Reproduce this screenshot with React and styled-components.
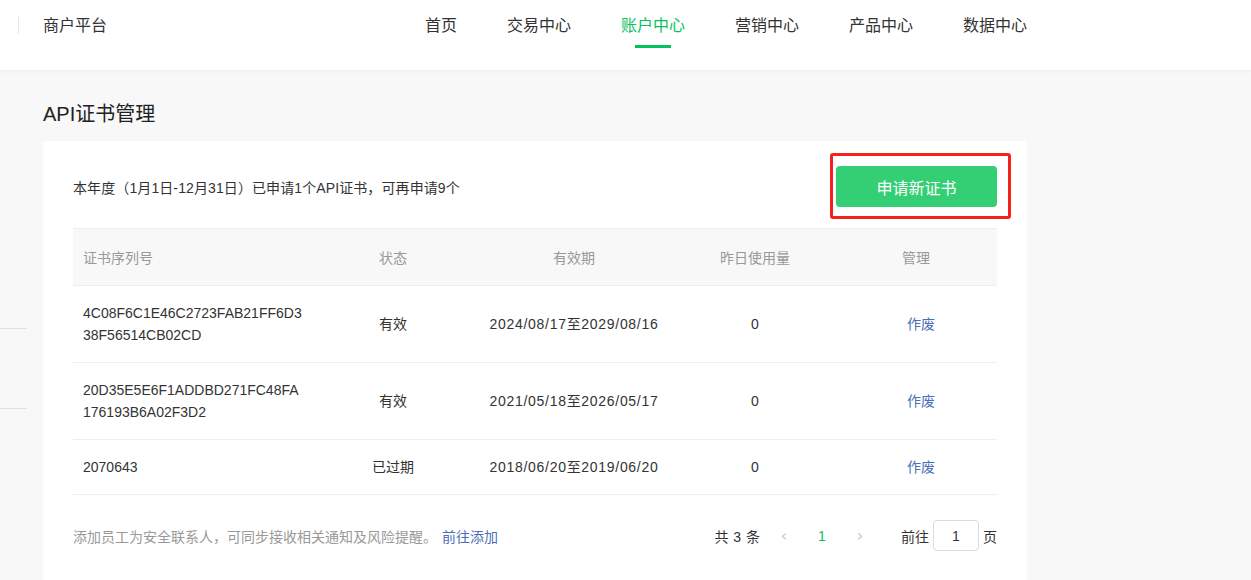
import React from 'react';
import styled, { createGlobalStyle, css } from 'styled-components';

const GlobalStyle = createGlobalStyle`
  html, body {
    margin: 0;
    padding: 0;
    background: #f8f8f8;
    font-family: "Liberation Sans", "Noto Sans CJK SC", sans-serif;
    color: #333;
  }
  * { box-sizing: border-box; }
`;

const Header = styled.header`
  height: 71px;
  background: #fff;
  border-bottom: 1px solid #f0f0f0;
  box-shadow: 0 1px 3px rgba(0, 0, 0, 0.03);
  display: flex;
  align-items: flex-start;
  padding-left: 18px;
`;

const Brand = styled.div`
  margin-top: 17px;
  height: 17px;
  border-left: 1px solid #e6e6e6;
  padding-left: 24px;
  display: flex;
  align-items: center;
  font-size: 16px;
  color: #333;
  line-height: 20px;
`;

const Nav = styled.nav`
  display: flex;
  gap: 50px;
  margin-left: 318px;
`;

const NavItem = styled.a`
  position: relative;
  padding-top: 16px;
  font-size: 16px;
  line-height: 20px;
  color: #333;
  cursor: pointer;
  ${(props) =>
    props.active &&
    css`
      color: #07c160;
      &::after {
        content: '';
        position: absolute;
        left: 50%;
        top: 45px;
        width: 36px;
        margin-left: -18px;
        height: 3px;
        background: #07c160;
      }
    `}
`;

const Body = styled.div`
  display: flex;
`;

const Rail = styled.aside`
  width: 27px;
  flex-shrink: 0;
  padding-top: 257px;
`;

const RailLine = styled.div`
  height: 1px;
  background: #e2e2e2;
  margin-bottom: ${(props) => props.mb || '0'};
`;

const Main = styled.main`
  padding: 28px 0 0 16px;
  width: 1000px;
`;

const Title = styled.h1`
  margin: 0 0 12px;
  font-size: 20px;
  font-weight: normal;
  line-height: 30px;
  color: #222;
`;

const Card = styled.section`
  width: 984px;
  background: #fff;
  border-radius: 4px;
  padding: 0 30px 40px;
`;

const InfoRow = styled.div`
  display: flex;
  align-items: center;
  justify-content: space-between;
  padding: 25px 0 21px;
`;

const InfoText = styled.p`
  margin: 0;
  font-size: 14px;
  color: #333;
  letter-spacing: 0.1px;
`;

const Highlight = styled.div`
  position: relative;
`;

const Marker = styled.span`
  position: absolute;
  left: -6px;
  top: -13px;
  width: 181px;
  height: 66px;
  border: 3px solid #f5221b;
  border-radius: 3px;
  pointer-events: none;
`;

const PrimaryButton = styled.button`
  width: 161px;
  height: 41px;
  border: none;
  border-radius: 4px;
  background: #34cf74;
  color: #fff;
  font-size: 16px;
  font-family: inherit;
  cursor: pointer;
`;

const Table = styled.table`
  width: 100%;
  border-collapse: collapse;
  table-layout: fixed;
  font-size: 14px;
`;

const Th = styled.th`
  height: 57px;
  padding: 0 10px;
  background: #f8f8f8;
  border-top: 1px solid #eeeeee;
  border-bottom: 1px solid #eeeeee;
  font-weight: normal;
  color: #999;
  text-align: ${(props) => props.align || 'center'};
`;

const Td = styled.td`
  padding: 16px 10px;
  line-height: 22px;
  border-bottom: 1px solid #eeeeee;
  color: #333;
  text-align: ${(props) => props.align || 'center'};
  word-break: break-all;
`;

const Period = styled.span`
  letter-spacing: 0.7px;
`;

const Link = styled.a`
  color: #4a6fb6;
  cursor: pointer;
  text-decoration: none;
`;

const RowLink = styled(Link)`
  margin-left: 10px;
`;

const Footer = styled.div`
  display: flex;
  align-items: center;
  justify-content: space-between;
  padding-top: 25px;
`;

const Tip = styled.p`
  margin: 0;
  font-size: 14px;
  color: #999;
`;

const TipLink = styled(Link)`
  margin-left: 5px;
`;

const Pager = styled.div`
  display: flex;
  align-items: center;
  font-size: 14px;
  color: #333;
`;

const PagerArrow = styled.span`
  width: 38px;
  text-align: center;
  color: #c8c8c8;
  font-size: 16px;
  font-family: "DejaVu Sans", sans-serif;
`;

const PagerNum = styled.span`
  width: 38px;
  text-align: center;
  color: #07c160;
`;

const Total = styled.span`
  margin-right: 5px;
  word-spacing: 1px;
`;

const Jump = styled.span`
  margin-left: 22px;
  display: flex;
  align-items: center;
  gap: 4px;
`;

const PageInput = styled.input`
  width: 46px;
  height: 31px;
  border: 1px solid #dcdcdc;
  border-radius: 4px;
  text-align: center;
  font-size: 14px;
  font-family: inherit;
  color: #333;
  outline: none;
`;

const columns = [
  { key: 'serial', title: '证书序列号', width: 240, align: 'left' },
  { key: 'status', title: '状态', width: 160 },
  { key: 'period', title: '有效期', width: 202 },
  { key: 'usage', title: '昨日使用量', width: 160 },
  { key: 'manage', title: '管理', width: 162 },
];

const rows = [
  { serial: '4C08F6C1E46C2723FAB21FF6D338F56514CB02CD', status: '有效', period: '2024/08/17至2029/08/16', usage: 0 },
  { serial: '20D35E5E6F1ADDBD271FC48FA176193B6A02F3D2', status: '有效', period: '2021/05/18至2026/05/17', usage: 0 },
  { serial: '2070643', status: '已过期', period: '2018/06/20至2019/06/20', usage: 0 },
];

const navItems = ['首页', '交易中心', '账户中心', '营销中心', '产品中心', '数据中心'];

export default function App() {
  return (
    <>
      <GlobalStyle />
      <Header>
        <Brand>商户平台</Brand>
        <Nav>
          {navItems.map((item) => (
            <NavItem key={item} active={item === '账户中心'}>
              {item}
            </NavItem>
          ))}
        </Nav>
      </Header>
      <Body>
        <Rail>
          <RailLine mb="79px" />
          <RailLine />
        </Rail>
        <Main>
          <Title>API证书管理</Title>
          <Card>
            <InfoRow>
              <InfoText>本年度（1月1日-12月31日）已申请1个API证书，可再申请9个</InfoText>
              <Highlight>
                <PrimaryButton>申请新证书</PrimaryButton>
                <Marker />
              </Highlight>
            </InfoRow>
            <Table>
              <colgroup>
                {columns.map((c) => (
                  <col key={c.key} style={{ width: c.width }} />
                ))}
              </colgroup>
              <thead>
                <tr>
                  {columns.map((c) => (
                    <Th key={c.key} align={c.align}>
                      {c.title}
                    </Th>
                  ))}
                </tr>
              </thead>
              <tbody>
                {rows.map((r) => (
                  <tr key={r.serial}>
                    <Td align="left">{r.serial}</Td>
                    <Td>{r.status}</Td>
                    <Td>
                      <Period>{r.period}</Period>
                    </Td>
                    <Td>{r.usage}</Td>
                    <Td>
                      <RowLink>作废</RowLink>
                    </Td>
                  </tr>
                ))}
              </tbody>
            </Table>
            <Footer>
              <Tip>
                添加员工为安全联系人，可同步接收相关通知及风险提醒。
                <TipLink>前往添加</TipLink>
              </Tip>
              <Pager>
                <Total>共 3 条</Total>
                <PagerArrow>‹</PagerArrow>
                <PagerNum>1</PagerNum>
                <PagerArrow>›</PagerArrow>
                <Jump>
                  前往
                  <PageInput defaultValue="1" />
                  页
                </Jump>
              </Pager>
            </Footer>
          </Card>
        </Main>
      </Body>
    </>
  );
}
